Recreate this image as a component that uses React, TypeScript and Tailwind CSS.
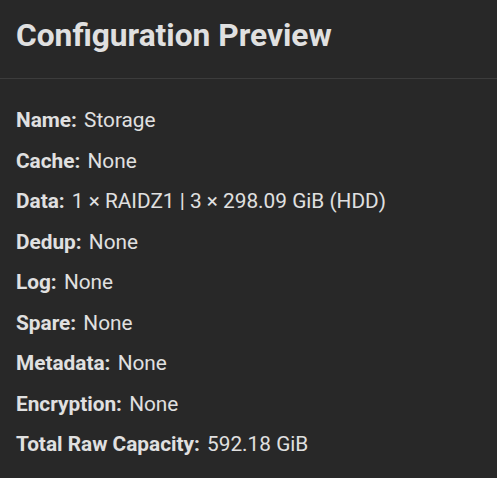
const rows: [string, string][] = [
  ["Name:", "Storage"],
  ["Cache:", "None"],
  ["Data:", "1 × RAIDZ1 | 3 × 298.09 GiB (HDD)"],
  ["Dedup:", "None"],
  ["Log:", "None"],
  ["Spare:", "None"],
  ["Metadata:", "None"],
  ["Encryption:", "None"],
  ["Total Raw Capacity:", "592.18 GiB"],
];

export default function App() {
  return (
    <div className="w-[497px] h-[478px] bg-[#282828] text-[#e0e0e0] font-['Roboto',sans-serif] overflow-hidden">
      <div className="px-4 pt-4 pb-[22px] border-b border-[#3c3c3c]">
        <h2 className="text-[31.7px] leading-[40px] font-bold">Configuration Preview</h2>
      </div>
      <div className="px-4 pt-[29px] flex flex-col gap-[16.5px]">
        {rows.map(([k, v]) => (
          <div key={k} className="text-[20.8px] leading-6">
            <span className="font-bold mr-[2px]">{k}</span> {v}
          </div>
        ))}
      </div>
    </div>
  );
}
